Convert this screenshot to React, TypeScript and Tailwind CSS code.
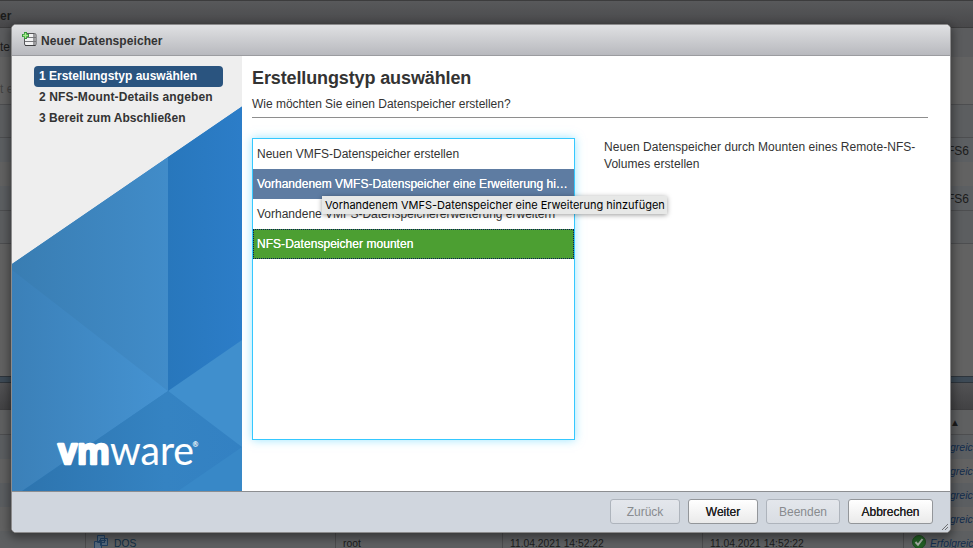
import { type ReactNode } from "react";

const steps = ["1 Erstellungstyp auswählen", "2 NFS-Mount-Details angeben", "3 Bereit zum Abschließen"];

function DatastoreIcon() {
  return (
    <svg width="16" height="16" viewBox="0 0 16 16" className="shrink-0">
      <rect x="2.500" y="1.500" width="11.500" height="12" rx="1.500" fill="#f1f1f2" stroke="#57575a" />
      <path d="M11 2v11h2.500V2z" fill="#99999c" />
      <path d="M3 5.500h11M3 9.500h11" stroke="#77777a" strokeWidth="1" />
      <path d="M3 13.500h10.500" stroke="#3f3f41" strokeWidth="1.200" />
      <path d="M3.500 0v7M0 3.500h7" stroke="#37953a" strokeWidth="3" />
      <path d="M3.500 1v5M1 3.500h5" stroke="#a5ee8c" strokeWidth="1.300" />
    </svg>
  );
}

function Artwork() {
  return (
    <svg width="230" height="435" viewBox="0 0 230 435" className="absolute left-0 top-0">
      <defs>
        <linearGradient id="upper"><stop offset="0" stopColor="#397db2" /><stop offset="1" stopColor="#418cc9" /></linearGradient>
        <linearGradient id="left"><stop offset="0" stopColor="#3b80b8" /><stop offset="1" stopColor="#4593d2" /></linearGradient>
        <linearGradient id="lower"><stop offset="0" stopColor="#2d74ae" /><stop offset=".65" stopColor="#3583c2" /><stop offset="1" stopColor="#3381c3" /></linearGradient>
        <linearGradient id="deep"><stop offset="0" stopColor="#2877bc" /><stop offset="1" stopColor="#2c7dc8" /></linearGradient>
      </defs>
      <path d="M0 208 230 50.500V435H0z" fill="#3583c2" />
      <path d="M0 208 156 101V335L0 221z" fill="url(#upper)" />
      <path d="M156 101 230 50.500V285L156 336z" fill="url(#deep)" />
      <path d="M0 214 156 335 10 435H0z" fill="url(#left)" />
      <path d="M156 335 230 284V393z" fill="#408fcd" />
      <path d="M156 335 230 391V435H10z" fill="url(#lower)" />
      <path d="M230 391V435H166z" fill="#3888c7" />
      <g fill="white" stroke="white" strokeLinejoin="round">
        <text x="46" y="408" fontSize="36" fontWeight="700" strokeWidth="2.400" textLength="52" lengthAdjust="spacingAndGlyphs" className="font-['Open_Sans',sans-serif]">vm</text>
        <text x="98" y="408.500" fontSize="40" strokeWidth=".1" textLength="84" lengthAdjust="spacingAndGlyphs" className="font-[Lato,sans-serif]">ware</text>
        <text x="180.500" y="391" fontSize="7" strokeWidth=".1" className="font-[Lato,sans-serif]">®</text>
      </g>
    </svg>
  );
}

function Row({ className, children }: { className: string; children?: ReactNode }) {
  return <div className={`flex shrink-0 items-center justify-between overflow-hidden ${className}`}>{children}</div>;
}

function Result() {
  return <span className="w-[23px] whitespace-nowrap text-[10.5px] italic text-[#122c4d]">greic</span>;
}

function Backdrop() {
  return (
    <div className="flex h-[548px] w-[973px] flex-col text-[12px] text-[#1b1b1b]">
      <Row className="h-7 border-b border-t border-[#3c3c3d] bg-linear-to-b from-[#58595b] to-[#48484a] text-[12px] font-bold"><span className="pt-1">er</span></Row>
      <Row className="h-[29px] bg-[#5b5c5e] pt-2"><span>te</span></Row>
      <Row className="h-[47px] bg-[#626262] pt-4 text-[#444]"><span>t e</span></Row>
      <Row className="h-[33px] border-t border-[#4d4e50] bg-[#5c5e60]" />
      <Row className="h-[25px] border-t border-[#4d4e50] bg-[#5c5f62] pt-0.5"><span /><span className="w-[26px]">FS6</span></Row>
      <Row className="h-6 bg-[#626262]" />
      <Row className="h-6 bg-[#5c5f62] pt-0.5"><span /><span className="w-[26px]">FS6</span></Row>
      <Row className="h-[33px] border-t border-[#4d4e50] bg-[#5c5e60]" />
      <Row className="h-[133px] border-t border-[#4d4e50] bg-[#626262]" />
      <Row className="h-[7px] border-y border-[#2e353c] bg-[#3d4a56]" />
      <Row className="h-[26px] bg-linear-to-b from-[#525254] to-[#424244]" />
      <Row className="h-[25px] border-t border-[#3e3e40] bg-[#5f6061]"><span /><span className="w-[23px] text-[10px]">▲</span></Row>
      <Row className="h-[25px] border-t border-[#4d4e50] bg-[#5b5e61] pt-0.5"><span /><Result /></Row>
      <Row className="h-6 bg-[#626262] pt-0.5"><span /><Result /></Row>
      <Row className="h-6 bg-[#5b5e61] pt-0.5"><span /><Result /></Row>
      <Row className="h-6 bg-[#626262] pt-0.5"><span /><Result /></Row>
      <div className="grid h-[17px] grid-cols-[85px_250px_167px_200px_201px_70px] overflow-hidden bg-[#5d5f61] text-[10.3px] leading-[25px]">
        <span />
        <span className="flex gap-[6px] border-l border-[#4b4c4e] pl-2 text-[#122d43]">
          <svg width="14" height="15" viewBox="0 0 14 15" className="mt-1" fill="#53677b" stroke="#213f60"><path d="M3.500 .5h7v7h-7zM.5 6.500h7v7h-7zM6.500 3.500h7v7h-7z" /><path d="M5 5.500h7M5 7.500h6" fill="none" /></svg>
          DOS
        </span>
        <span className="border-l border-[#4b4c4e] pl-[7px]">root</span>
        <span className="border-l border-[#4b4c4e] pl-[7px]">11.04.2021 14:52:22</span>
        <span className="border-l border-[#4b4c4e] pl-[7px]">11.04.2021 14:52:22</span>
        <span className="flex gap-1 border-l border-[#4b4c4e] pl-2 italic text-[#122c4d]">
          <svg width="14" height="14" viewBox="0 0 14 14" className="mt-1 shrink-0"><circle cx="7" cy="7" r="6.500" fill="#235e25" stroke="#1d4a1f" /><path d="m3.500 7 2.500 2.800L10.500 4" fill="none" stroke="#a6aea5" strokeWidth="2" /></svg>
          Erfolgreic
        </span>
      </div>
    </div>
  );
}

function Button({ width, disabled = false, children }: { width: string; disabled?: boolean; children: ReactNode }) {
  return (
    <button
      disabled={disabled}
      className={`${width} h-[25px] rounded-[3px] border text-[12px] ${disabled ? "border-[#aeb4bc] bg-linear-to-b from-[#e4e7ec] to-[#d9dde3] text-[#888b8f]" : "border-[#93969a] bg-linear-to-b from-white to-[#eaeaea] text-[#222] [text-shadow:0_0_.5px_#222]"}`}
    >
      {children}
    </button>
  );
}

function Dialog() {
  return (
    <section className="absolute left-[11px] top-6 flex h-[509px] w-[940px] flex-col overflow-hidden rounded-[5px] border border-[#8b8b8c] bg-white shadow-[0_3px_10px_2px_rgba(0,0,0,0.4)]">
      <header className="flex h-[31px] shrink-0 items-center gap-[3px] border-b border-[#9b9ca0] bg-linear-to-b from-[#e0e1e3] to-[#b8b9be] pl-[10px] text-[12px] font-bold text-[#333]">
        <DatastoreIcon />
        <h1 className="pt-px tracking-[0.08px]">Neuer Datenspeicher</h1>
      </header>
      <div className="flex h-[435px] shrink-0">
        <aside className="relative w-[230px] bg-[#eee]">
          <Artwork />
          <ol className="relative ml-[22px] mt-[10px] w-[189px] text-[12px] font-bold leading-[21px] text-[#333]">
            {steps.map((step, index) => (
              <li key={step} className={`whitespace-nowrap pl-[5px] ${index === 0 ? "rounded-[4px] bg-[#2a547f] text-white" : index === 1 ? "tracking-[0.14px]" : "tracking-[0.04px]"}`}>{step}</li>
            ))}
          </ol>
        </aside>
        <main className="w-[686px] pl-[10px] text-[12px] text-[#333]">
          <h2 className="-ml-px pl-px pt-[9px] text-[18px] font-bold leading-[26px] tracking-[-0.12px]">Erstellungstyp auswählen</h2>
          <p className="h-[27px] border-b border-[#8e8e8e] pt-[5px] leading-4 tracking-[-0.02px]">Wie möchten Sie einen Datenspeicher erstellen?</p>
          <div className="flex pt-5">
            <ul className="h-[302px] w-[323px] shrink-0 border border-[#35c8ff] leading-[30px] shadow-[0_0_9px_rgba(70,205,255,0.55)]">
              <li className="h-[30px] pl-1">Neuen VMFS-Datenspeicher erstellen</li>
              <li className="h-[30px] truncate bg-[#5e7ca2] px-1 text-white [text-shadow:0_0_.5px_white]">Vorhandenem VMFS-Datenspeicher eine Erweiterung hi…</li>
              <li className="h-[30px] pl-1">Vorhandene VMFS-Datenspeichererweiterung erweitern</li>
              <li className="h-[30px] border border-dotted border-[#07165c] bg-[#4c9f32] pl-[3px] leading-[28px] tracking-[0.04px] text-white [text-shadow:0_0_.5px_white]">NFS-Datenspeicher mounten</li>
            </ul>
            <p className="ml-[29px] w-[324px] pt-px leading-[17px] tracking-[0.05px]">Neuen Datenspeicher durch Mounten eines Remote-NFS-Volumes erstellen</p>
          </div>
        </main>
      </div>
      <footer className="relative flex flex-1 items-start justify-end border-t border-[#8c8e91] bg-[#d0d6de] pr-[17px] pt-[7px]">
        <div className="flex gap-2">
          <Button width="w-[70px]" disabled>Zurück</Button>
          <Button width="w-[70px]">Weiter</Button>
          <Button width="w-[74px]" disabled>Beenden</Button>
          <Button width="w-[85px]">Abbrechen</Button>
        </div>
        <svg width="7" height="7" className="absolute bottom-px right-px"><path d="M0 6 6 0M3 6l3-3" stroke="#444" strokeDasharray="1 .5" /></svg>
      </footer>
    </section>
  );
}

export default function App() {
  return (
    <div className="relative h-[548px] w-[973px] overflow-hidden font-['Liberation_Sans',Arial,sans-serif]">
      <Backdrop />
      <Dialog />
      <div className="absolute left-[322px] top-[196px] flex h-[18px] w-[345px] items-center whitespace-nowrap bg-[#e7e8e7] pl-[3px] font-[Inter,sans-serif] text-[11px] text-black shadow-[0_1px_5px_rgba(0,0,0,0.4)]">
        Vorhandenem VMFS-Datenspeicher eine Erweiterung hinzufügen
      </div>
    </div>
  );
}
